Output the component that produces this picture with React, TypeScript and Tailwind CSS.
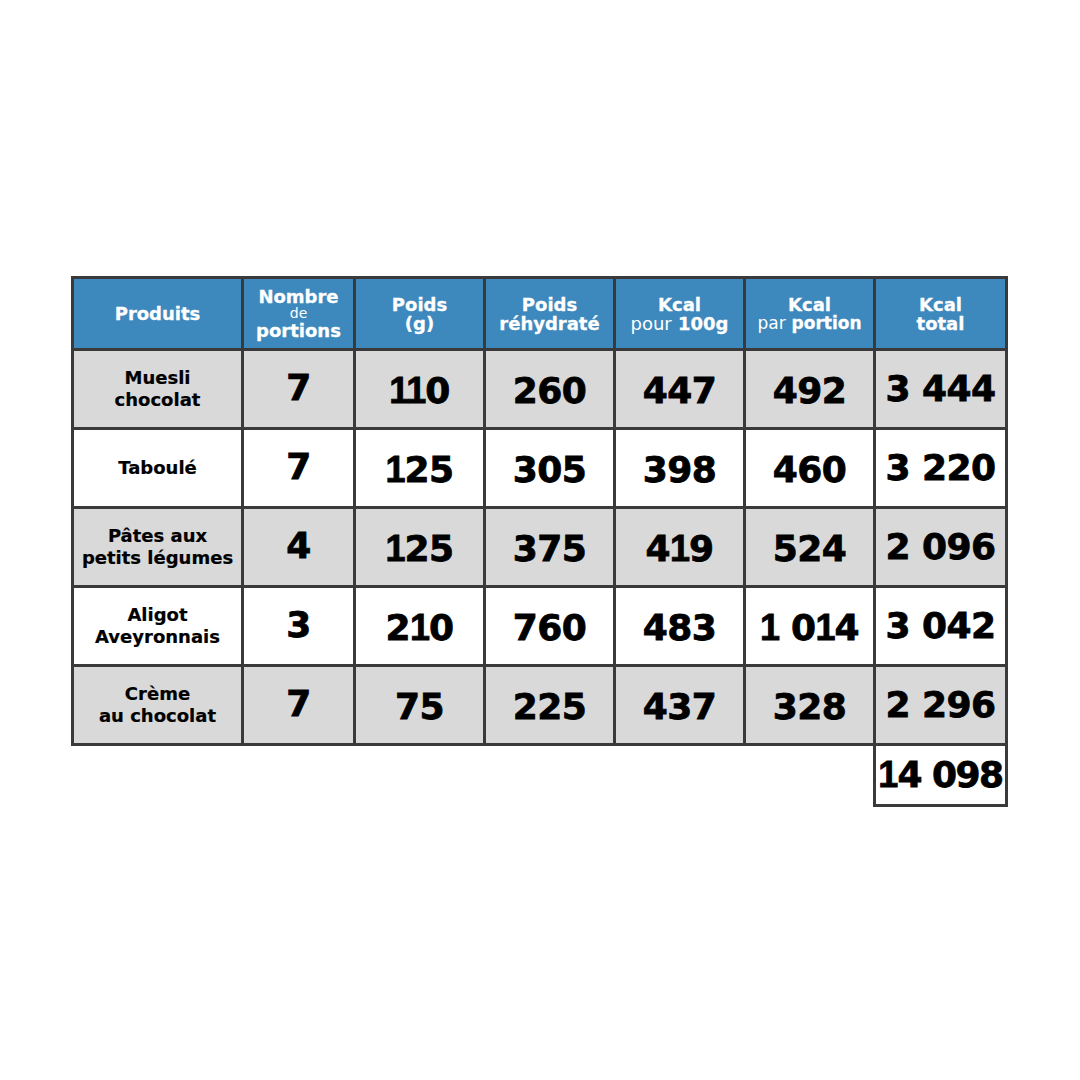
const rows = [
  { name: ["Muesli", "chocolat"], n: "7", p: "110", r: "260", k100: "447", kp: "492", kt: "3 444", gray: true },
  { name: ["Taboulé"], n: "7", p: "125", r: "305", k100: "398", kp: "460", kt: "3 220", gray: false },
  { name: ["Pâtes aux", "petits légumes"], n: "4", p: "125", r: "375", k100: "419", kp: "524", kt: "2 096", gray: true },
  { name: ["Aligot", "Aveyronnais"], n: "3", p: "210", r: "760", k100: "483", kp: "1 014", kt: "3 042", gray: false },
  { name: ["Crème", "au chocolat"], n: "7", p: "75", r: "225", k100: "437", kp: "328", kt: "2 296", gray: true },
];

const font = { fontFamily: '"DejaVu Sans", "Liberation Sans", sans-serif' };

// the "1" of the original typeface is narrow and has no foot, closer to Liberation's
function Num({ value }: { value: string }) {
  return (
    <span>
      {value.split(/(1)/).map((part, i) =>
        part === "1" ? (
          <span key={i} className="font-['Liberation_Sans'] tracking-[-1px]">
            1
          </span>
        ) : (
          part
        )
      )}
    </span>
  );
}

function Head({ children }: { children: React.ReactNode }) {
  return (
    <div className="bg-[#3d88bd] text-white flex flex-col items-center justify-center text-center text-[18px] font-bold leading-[19px] [-webkit-text-stroke:0.3px_white]">
      {children}
    </div>
  );
}

export default function App() {
  return (
    <div className="w-[1080px] h-[1080px] bg-white pt-[276px] pl-[71px]" style={font}>
      <div className="w-[937px] grid grid-cols-[167px_109px_127px_127px_127px_127px_129px] grid-rows-[69px_76px_76px_76px_76px_76px] gap-[3px] p-[3px] bg-[#3a3a3a]">
        <Head>Produits</Head>
        <Head>
          <span className="leading-[19px]">Nombre</span>
          <span className="font-normal text-[14px] leading-[15px] [-webkit-text-stroke:0px]">de</span>
          <span className="leading-[19px]">portions</span>
        </Head>
        <Head>
          <span>Poids</span>
          <span>(g)</span>
        </Head>
        <Head>
          <span>Poids</span>
          <span>réhydraté</span>
        </Head>
        <Head>
          <span>Kcal</span>
          <span>
            <span className="font-normal [-webkit-text-stroke:0px]">pour</span> 100g
          </span>
        </Head>
        <Head>
          <span>Kcal</span>
          <span className="whitespace-nowrap text-[17px]">
            <span className="font-normal [-webkit-text-stroke:0px]">par</span> portion
          </span>
        </Head>
        <Head>
          <span>Kcal</span>
          <span>total</span>
        </Head>
        {rows.map((row) => {
          const bg = row.gray ? "bg-[#d9d9d9]" : "bg-white";
          const num = `${bg} flex items-center justify-center whitespace-nowrap text-[36px] font-bold text-black tracking-[-0.5px] [-webkit-text-stroke:0.8px_black]`;
          return [
            <div key={row.name[0]} className={`${bg} flex flex-col items-center justify-center text-center text-[18px] font-bold leading-[22px] text-black [-webkit-text-stroke:0.2px_black]`}>
              {row.name.map((l) => (
                <span key={l}>{l}</span>
              ))}
            </div>,
            <div key={row.name[0] + "n"} className={`${num} pb-[3px]`}><Num value={row.n} /></div>,
            <div key={row.name[0] + "p"} className={`${num} pt-[4px]`}><Num value={row.p} /></div>,
            <div key={row.name[0] + "r"} className={`${num} pt-[4px]`}><Num value={row.r} /></div>,
            <div key={row.name[0] + "k"} className={`${num} pt-[4px]`}><Num value={row.k100} /></div>,
            <div key={row.name[0] + "kp"} className={`${num} pt-[4px]`}><Num value={row.kp} /></div>,
            <div key={row.name[0] + "kt"} className={num}><Num value={row.kt} /></div>,
          ];
        })}
      </div>
      <div className="w-[937px] flex justify-end">
        <div className="w-[135px] h-[61px] border-[3px] border-t-0 border-[#3a3a3a] bg-white flex items-center justify-center whitespace-nowrap text-[36px] font-bold text-black tracking-[-1.5px] [-webkit-text-stroke:0.8px_black]">
          <Num value="14 098" />
        </div>
      </div>
    </div>
  );
}
